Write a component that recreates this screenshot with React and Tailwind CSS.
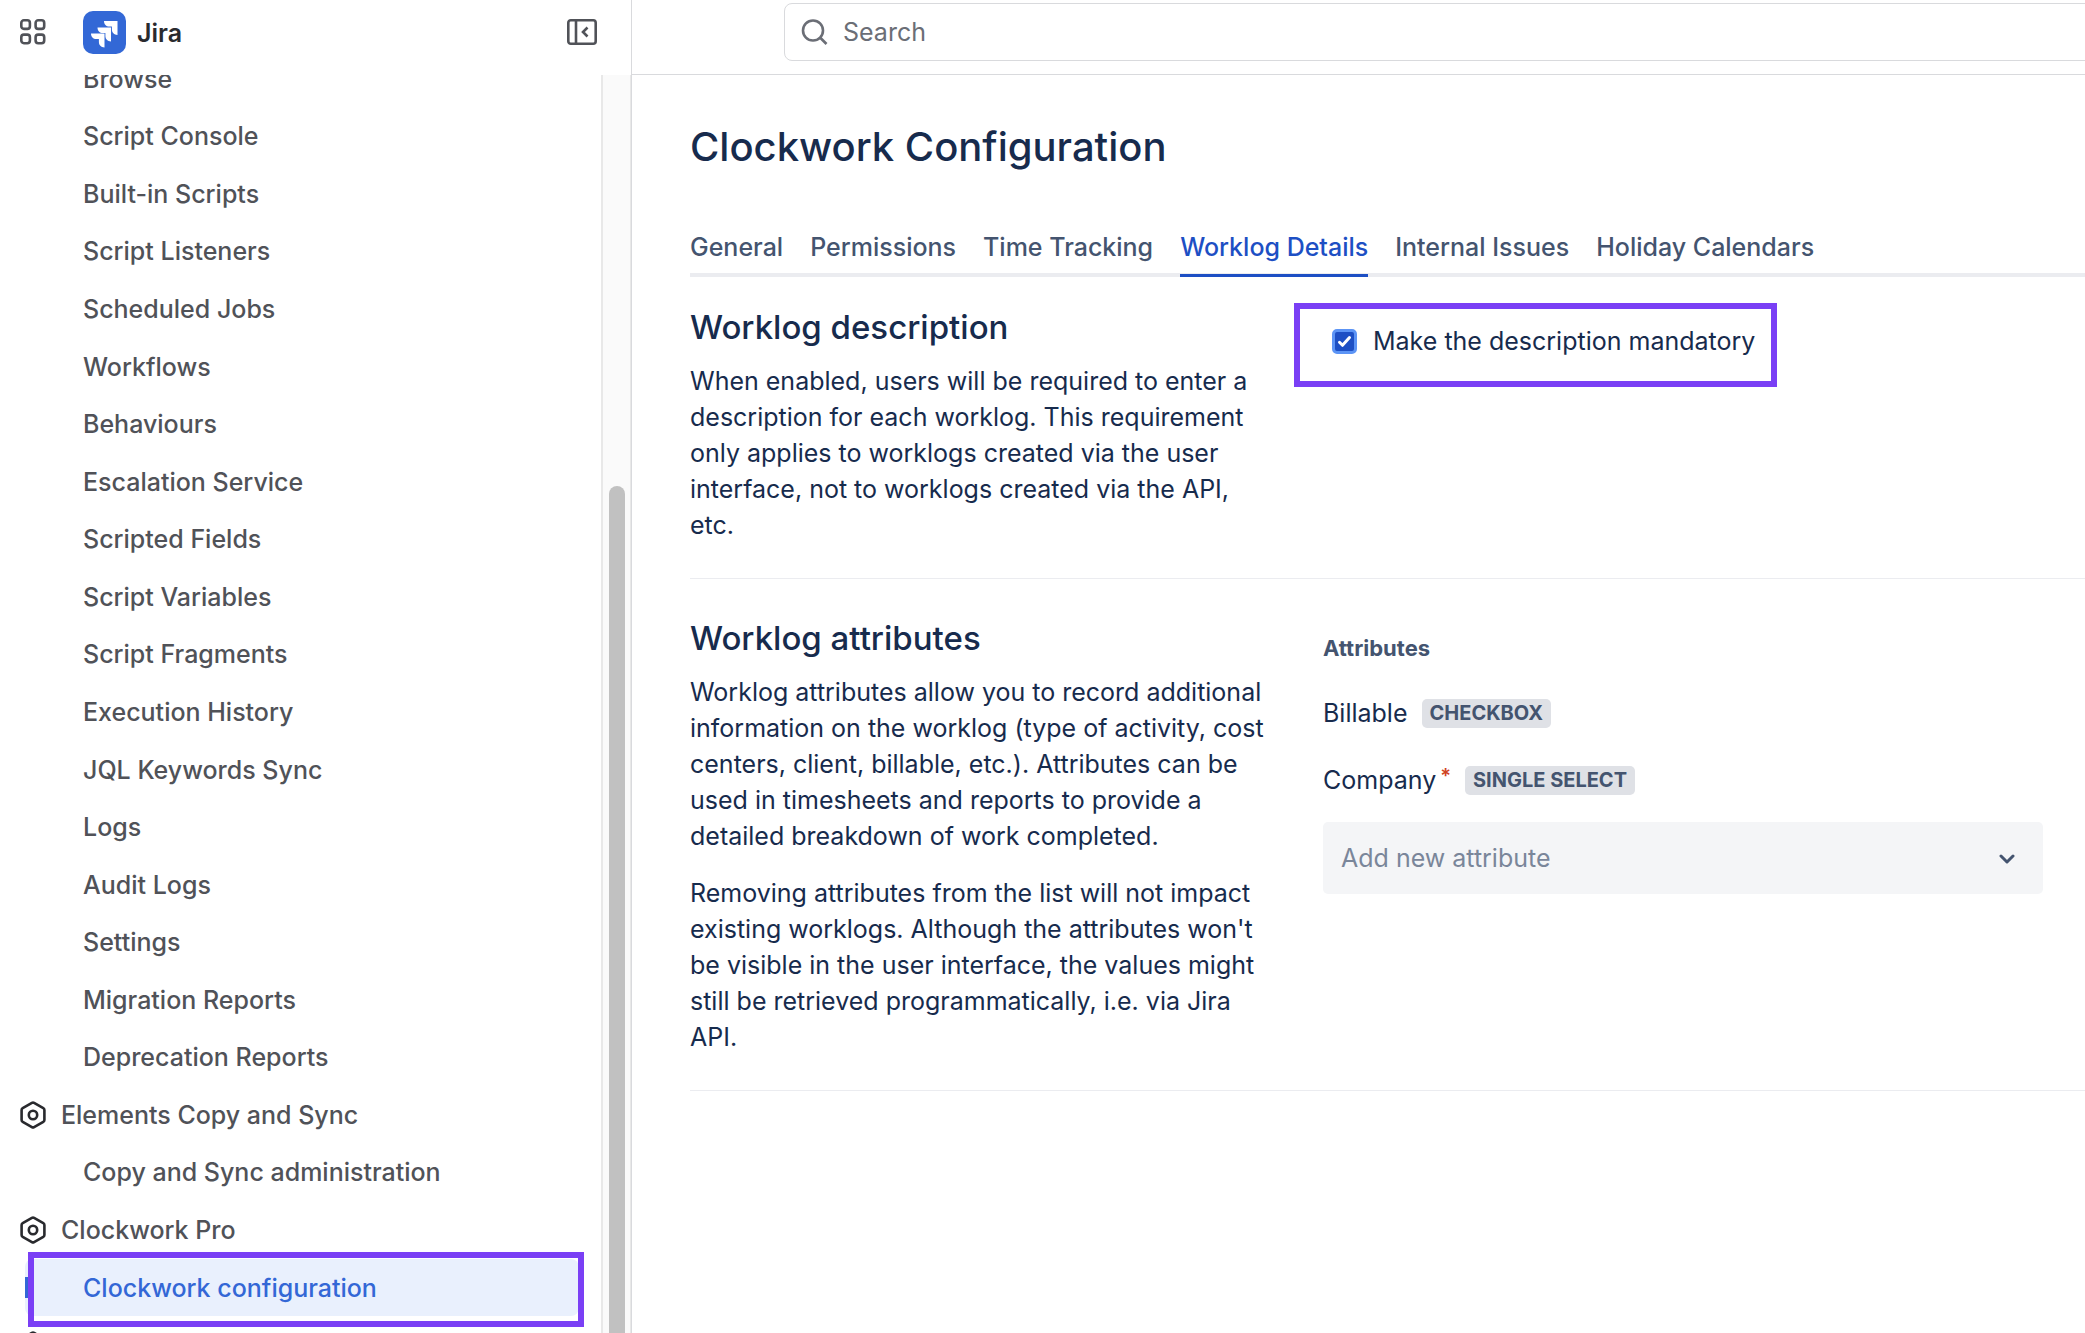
import { useState } from 'react'

const navItems = [
  { label: 'Browse' },
  { label: 'Script Console' },
  { label: 'Built-in Scripts' },
  { label: 'Script Listeners' },
  { label: 'Scheduled Jobs' },
  { label: 'Workflows' },
  { label: 'Behaviours' },
  { label: 'Escalation Service' },
  { label: 'Scripted Fields' },
  { label: 'Script Variables' },
  { label: 'Script Fragments' },
  { label: 'Execution History' },
  { label: 'JQL Keywords Sync' },
  { label: 'Logs' },
  { label: 'Audit Logs' },
  { label: 'Settings' },
  { label: 'Migration Reports' },
  { label: 'Deprecation Reports' },
  { label: 'Elements Copy and Sync', section: true },
  { label: 'Copy and Sync administration' },
  { label: 'Clockwork Pro', section: true },
  { label: 'Clockwork configuration', selected: true },
]

const tabs = [
  'General',
  'Permissions',
  'Time Tracking',
  'Worklog Details',
  'Internal Issues',
  'Holiday Calendars',
]

const AppsIcon = () => (
  <svg viewBox="0 0 26 26" className="size-[26px]" fill="none" stroke="currentColor" strokeWidth="2.6">
    <rect x="1.3" y="1.3" width="8.6" height="8.6" rx="2.6" />
    <rect x="15.6" y="1.3" width="8.6" height="8.6" rx="2.6" />
    <rect x="1.3" y="15.6" width="8.6" height="8.6" rx="2.6" />
    <rect x="15.6" y="15.6" width="8.6" height="8.6" rx="2.6" />
  </svg>
)

const JiraLogo = () => (
  <svg viewBox="0 0 43 43" className="size-[43px]">
    <rect width="43" height="43" rx="10" fill="#3368d6" />
    <g fill="#fff">
      <path d="M21 10h13.5v14c-3.4 0-5.6-2.3-5.600-5.400v-3h-2.600C23.200 15.600 21 13.300 21 10z" />
      <path d="M14.500 16.400H28v14c-3.400 0-5.600-2.300-5.600-5.400v-3h-2.600c-3.100 0-5.300-2.300-5.300-5.600z" />
      <path d="M8 22.400h13.500v14c-3.400 0-5.600-2.300-5.600-5.400v-3h-2.600C10.200 28 8 25.700 8 22.400z" />
    </g>
  </svg>
)

const CollapseIcon = () => (
  <svg viewBox="0 0 30 26" className="h-[26px] w-[30px]" fill="none" stroke="currentColor" strokeWidth="2.6">
    <rect x="1.3" y="1.3" width="27.4" height="23.4" rx="2.5" />
    <path d="M9 1v24" />
    <path d="M20.500 8.500L16 13l4.500 4.500" />
  </svg>
)

const HexIcon = () => (
  <svg viewBox="0 0 28 28" className="size-7 shrink-0 text-[#292a2e]" fill="none" stroke="currentColor" strokeWidth="2.6">
    <path d="M12.900 1.900a2.200 2.200 0 0 1 2.200 0l9.200 5.200a2.200 2.200 0 0 1 1.100 1.900v10a2.200 2.200 0 0 1-1.100 1.900l-9.200 5.200a2.200 2.200 0 0 1-2.200 0l-9.200-5.200A2.200 2.200 0 0 1 2.600 19V9a2.200 2.200 0 0 1 1.100-1.900z" />
    <circle cx="14" cy="14" r="4.2" />
  </svg>
)

const SearchIcon = () => (
  <svg viewBox="0 0 28 26" className="h-[26px] w-7 shrink-0" fill="none" stroke="currentColor" strokeWidth="2.6">
    <circle cx="12" cy="11.5" r="10" />
    <path d="M19 18.500l6.500 6.500" />
  </svg>
)

const NavItem = ({ item }) => {
  if (item.section) {
    return (
      <li className="flex flex-1 items-center">
        <a href="#" className="flex items-center gap-[14px] pl-[19px]">
          <HexIcon />
          {item.label}
        </a>
      </li>
    )
  }

  if (item.selected) {
    return (
      <li className="relative flex flex-1">
        <a
          href="#"
          aria-current="page"
          className="ml-[25px] mr-[22px] flex flex-1 items-center rounded-lg bg-[#e9f0fd] pl-[58px] text-[#3367d6]"
        >
          {item.label}
        </a>
        <span className="absolute left-[25px] top-[18px] h-[21px] w-1 bg-[#3367d6]" />
        <span className="pointer-events-none absolute -bottom-[11px] -top-[7px] left-7 right-[17px] border-[6px] border-[#7a3ff5]" />
      </li>
    )
  }

  return (
    <li className="flex flex-1 items-center">
      <a href="#" className="pl-[83px]">{item.label}</a>
    </li>
  )
}

const Sidebar = () => (
  <aside className="flex w-[632px] shrink-0 flex-col border-r border-[#d9dadd]">
    <div className="flex h-[75px] shrink-0 items-start pl-5 pr-[34px] pt-[11px] text-[#505258]">
      <button type="button" aria-label="Switch sites or apps" className="mt-2">
        <AppsIcon />
      </button>
      <a href="#" className="ml-[37px] flex items-center gap-[11px] text-[25px] font-semibold text-[#292a2e]">
        <JiraLogo />
        Jira
      </a>
      <button type="button" aria-label="Collapse sidebar" className="ml-auto mt-2">
        <CollapseIcon />
      </button>
    </div>

    <div className="flex min-h-0 flex-1">
      <nav className="flex min-w-0 flex-1 flex-col overflow-hidden">
        <ul className="-mb-[41px] -mt-[25px] flex flex-1 flex-col text-[25px] leading-9 font-medium text-[#505258]">
          {navItems.map((item) => (
            <NavItem key={item.label} item={item} />
          ))}
          <li className="flex flex-1 items-center pl-[19px]">
            <HexIcon />
          </li>
        </ul>
      </nav>
      <div className="flex w-[30px] flex-col items-center border-l-2 border-r border-[#e8e8e8] bg-[#fafafa] pt-[411px]">
        <div className="w-4 flex-1 rounded-t-full bg-[#c1c1c1]" />
      </div>
    </div>
  </aside>
)

const Lozenge = ({ children }) => (
  <span className="rounded-[5px] bg-[#dfe1e6] px-2 text-[20px] leading-[29px] font-bold uppercase text-[#44546f]">
    {children}
  </span>
)

const App = () => {
  const [activeTab, setActiveTab] = useState('Worklog Details')
  const [mandatory, setMandatory] = useState(true)

  return (
    <div className="flex h-screen overflow-hidden bg-white font-['Inter',sans-serif] text-[25px] leading-9 text-[#172b4d]">
      <Sidebar />

      <div className="flex min-w-0 flex-1 flex-col">
        <header className="flex h-[75px] shrink-0 items-start border-b border-[#d9dadd] pl-[152px] pt-[3px]">
          <label className="-mr-2 flex h-[58px] flex-1 items-center gap-[14px] rounded-lg border border-[#d9dadd] pl-4 text-[#6b6e76]">
            <SearchIcon />
            <input
              type="search"
              aria-label="Search"
              placeholder="Search"
              className="w-full outline-none placeholder:text-[#6b6e76]"
            />
          </label>
        </header>

        <main className="flex-1 pl-[58px]">
          <h1 className="pt-11 text-[40px] leading-[56px] font-medium">Clockwork Configuration</h1>

          <div role="tablist" className="mt-[54px] flex gap-[27px] border-b-4 border-[#ebecf0] font-medium text-[#44546f]">
            {tabs.map((tab) => (
              <button
                key={tab}
                type="button"
                role="tab"
                aria-selected={tab === activeTab}
                onClick={() => setActiveTab(tab)}
                className={
                  tab === activeTab
                    ? '-mb-1 border-b-[3px] border-[#1d4fc4] pb-[9px] text-[#1d4fc4]'
                    : 'pb-2'
                }
              >
                {tab}
              </button>
            ))}
          </div>

          <section className="flex gap-[55px] border-b border-[#ebecf0] pb-[35px] pt-[27px]">
            <div className="w-[578px] shrink-0">
              <h2 className="text-[33px] leading-[46px] font-medium">Worklog description</h2>
              <p className="mt-[13px]">
                When enabled, users will be required to enter a description for each worklog. This
                requirement only applies to worklogs created via the user interface, not to worklogs
                created via the API, etc.
              </p>
            </div>
            <div className="relative h-fit">
              <label className="flex items-center gap-4 pl-[9px] pt-[19px]">
                <span className="relative flex">
                  <input
                    type="checkbox"
                    checked={mandatory}
                    onChange={(e) => setMandatory(e.target.checked)}
                    className="size-[25px] appearance-none rounded-[5px] border-[3px] border-[#5c94f5] checked:bg-[#1d4fc4]"
                  />
                  {mandatory && (
                    <svg viewBox="0 0 25 25" className="pointer-events-none absolute inset-0" fill="none" stroke="#fff" strokeWidth="3" strokeLinecap="round" strokeLinejoin="round">
                      <path d="M7.500 13.300l3 3 7-7.800" />
                    </svg>
                  )}
                </span>
                Make the description mandatory
              </label>
              <span className="pointer-events-none absolute -bottom-7 -left-[29px] -right-[22px] -top-px border-[6px] border-[#7a3ff5]" />
            </div>
          </section>

          <section className="flex gap-[55px] border-b border-[#ebecf0] pb-[35px] pt-9">
            <div className="w-[578px] shrink-0">
              <h2 className="text-[33px] leading-[46px] font-medium">Worklog attributes</h2>
              <p className="mt-[13px]">
                Worklog attributes allow you to record additional information on the worklog (type of
                activity, cost centers, client, billable, etc.). Attributes can be used in timesheets
                and reports to provide a detailed breakdown of work completed.
              </p>
              <p className="mt-[21px]">
                Removing attributes from the list will not impact existing worklogs. Although the
                attributes won't be visible in the user interface, the values might still be
                retrieved programmatically, i.e. via Jira API.
              </p>
            </div>
            <div className="mr-[42px] flex-1 pt-[15px]">
              <h3 className="text-[22px] font-bold text-[#44546f]">Attributes</h3>
              <ul>
                <li className="mt-[29px] flex items-center gap-[14px]">
                  Billable
                  <Lozenge>Checkbox</Lozenge>
                </li>
                <li className="mt-[31px] flex items-center gap-[14px]">
                  <span className="flex gap-1">
                    Company
                    <span className="text-[20px] leading-7 font-semibold text-[#d04323]">*</span>
                  </span>
                  <Lozenge>Single select</Lozenge>
                </li>
              </ul>
              <div className="relative mt-6">
                <select
                  aria-label="Add new attribute"
                  defaultValue=""
                  className="h-[72px] w-full appearance-none rounded-[5px] bg-[#f4f5f7] px-[18px] text-[#7a869a]"
                >
                  <option value="">Add new attribute</option>
                </select>
                <svg viewBox="0 0 16 10" className="pointer-events-none absolute right-7 top-8 h-[10px] w-4" fill="none" stroke="#44546f" strokeWidth="3" strokeLinecap="round" strokeLinejoin="round">
                  <path d="M2 2l6 6 6-6" />
                </svg>
              </div>
            </div>
          </section>
        </main>
      </div>
    </div>
  )
}

export default App
